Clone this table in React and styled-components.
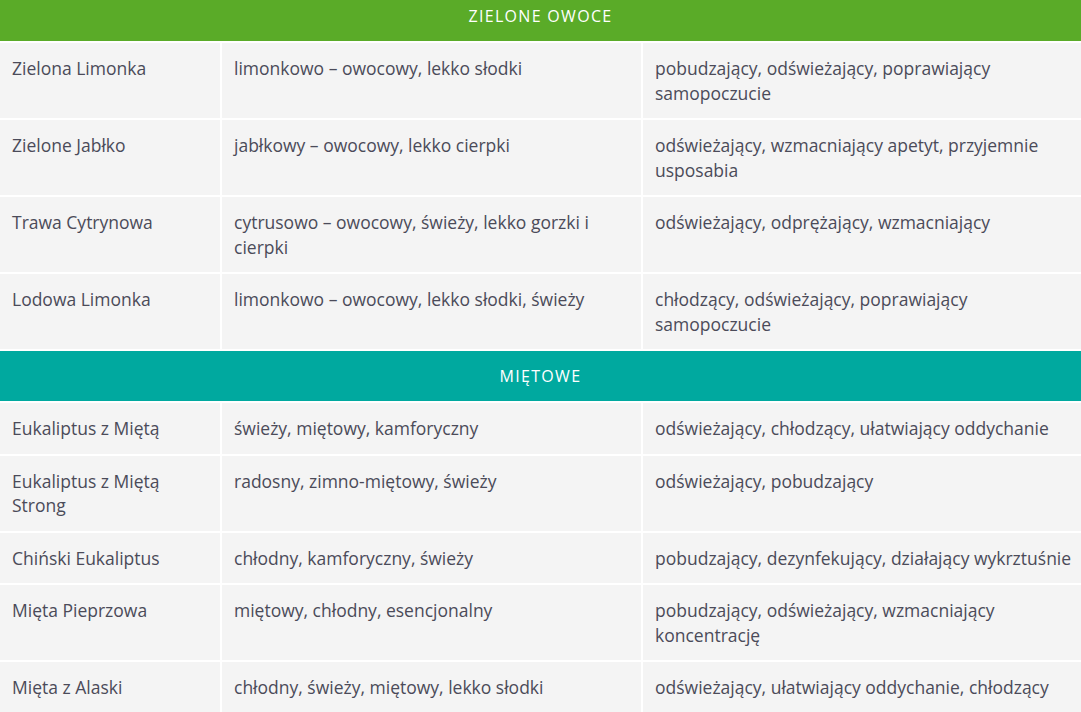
import React from 'react';
import styled, { createGlobalStyle } from 'styled-components';

const GlobalStyle = createGlobalStyle`
  html, body {
    margin: 0;
    padding: 0;
    background: #ffffff;
  }
  body {
    font-family: "Open Sans", Lato, "Liberation Sans", sans-serif;
    color: #4b4b59;
    overflow: hidden;
  }
`;

const Table = styled.div`
  width: 1081px;
  margin-top: -9px;
  display: grid;
  grid-template-columns: 220px 419px 438px;
  gap: 2px;
  background: #ffffff;
`;

const GroupHeader = styled.div`
  grid-column: 1 / -1;
  height: 50px;
  display: flex;
  align-items: center;
  justify-content: center;
  background: ${(p) => p.$color};
  color: #ffffff;
  font-size: 16px;
  letter-spacing: 1.3px;
  text-transform: uppercase;
`;

const Cell = styled.div`
  background: #f4f4f4;
  padding: 13px 6px 13px 12px;
  font-size: 17.5px;
  line-height: 24.5px;
  white-space: nowrap;
`;

const groups = [
  {
    title: 'Zielone owoce',
    color: '#5aab28',
    rows: [
      ['Zielona Limonka', ['limonkowo – owocowy, lekko słodki'], ['pobudzający, odświeżający, poprawiający', 'samopoczucie']],
      ['Zielone Jabłko', ['jabłkowy – owocowy, lekko cierpki'], ['odświeżający, wzmacniający apetyt, przyjemnie', 'usposabia']],
      ['Trawa Cytrynowa', ['cytrusowo – owocowy, świeży, lekko gorzki i', 'cierpki'], ['odświeżający, odprężający, wzmacniający']],
      ['Lodowa Limonka', ['limonkowo – owocowy, lekko słodki, świeży'], ['chłodzący, odświeżający, poprawiający', 'samopoczucie']],
    ],
  },
  {
    title: 'Miętowe',
    color: '#00a99f',
    rows: [
      ['Eukaliptus z Miętą', ['świeży, miętowy, kamforyczny'], ['odświeżający, chłodzący, ułatwiający oddychanie']],
      [['Eukaliptus z Miętą', 'Strong'], ['radosny, zimno-miętowy, świeży'], ['odświeżający, pobudzający']],
      ['Chiński Eukaliptus', ['chłodny, kamforyczny, świeży'], ['pobudzający, dezynfekujący, działający wykrztuśnie']],
      ['Mięta Pieprzowa', ['miętowy, chłodny, esencjonalny'], ['pobudzający, odświeżający, wzmacniający', 'koncentrację']],
      ['Mięta z Alaski', ['chłodny, świeży, miętowy, lekko słodki'], ['odświeżający, ułatwiający oddychanie, chłodzący']],
    ],
  },
];

function Lines({ value }) {
  const lines = Array.isArray(value) ? value : [value];
  return lines.map((line, i) => (
    <React.Fragment key={i}>
      {i > 0 && <br />}
      {line}
    </React.Fragment>
  ));
}

export default function App() {
  return (
    <>
      <GlobalStyle />
      <Table>
        {groups.map((group) => (
          <React.Fragment key={group.title}>
            <GroupHeader $color={group.color}>{group.title}</GroupHeader>
            {group.rows.map((row, r) =>
              row.map((cell, c) => (
                <Cell key={`${r}-${c}`}>
                  <Lines value={cell} />
                </Cell>
              ))
            )}
          </React.Fragment>
        ))}
      </Table>
    </>
  );
}
